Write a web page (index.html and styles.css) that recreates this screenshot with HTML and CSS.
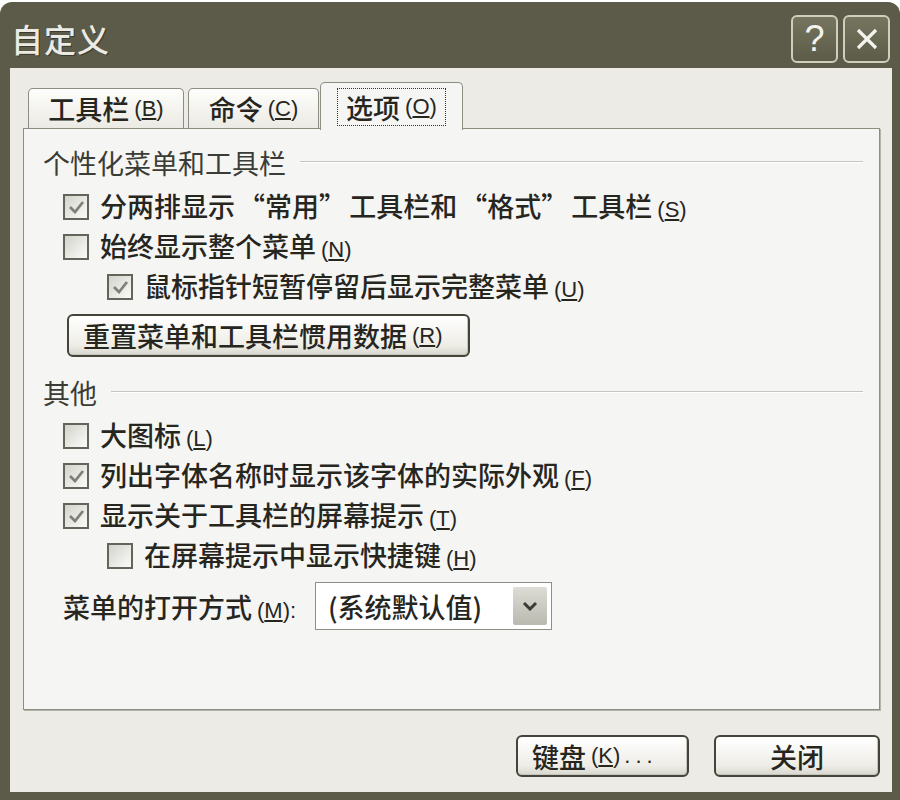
FILE: index.html
```
<!DOCTYPE html>
<html lang="zh">
<head>
    <meta charset="UTF-8" />
    <title>自定义</title>
    <link rel="stylesheet" href="styles.css">
</head>
<body>
    <div class="window">
        <div class="titlebar">
            <span class="title">自定义</span>
            <div class="caption-buttons">
                <span class="cap-btn">?</span>
                <span class="cap-btn">
                    <svg width="24" height="24" viewBox="0 0 24 24"><path d="M3 3 L21 21 M21 3 L3 21" stroke="#f4f4ee" stroke-width="3.2" fill="none"/></svg>
                </span>
            </div>
        </div>
        <div class="body">
            <div class="tabs">
                <div class="tab tab-toolbars">工具栏<span class="key">(<u>B</u>)</span></div>
                <div class="tab tab-commands">命令<span class="key">(<u>C</u>)</span></div>
                <div class="tab active"><span class="focus">选项<span class="key">(<u>O</u>)</span></span></div>
            </div>
            <div class="panel">
                <div class="group group-first"><span>个性化菜单和工具栏</span></div>
                <div class="row row-first">
                    <span class="check"><svg width="17" height="14" viewBox="0 0 17 14"><polyline points="2,7 7,12 15,2" stroke="#808078" stroke-width="2.8" fill="none"/></svg></span>
                    <span class="label">分两排显示 “常用” 工具栏和 “格式” 工具栏<span class="key">(<u>S</u>)</span></span>
                </div>
                <div class="row">
                    <span class="check"></span>
                    <span class="label">始终显示整个菜单<span class="key">(<u>N</u>)</span></span>
                </div>
                <div class="row row-sub">
                    <span class="check"><svg width="17" height="14" viewBox="0 0 17 14"><polyline points="2,7 7,12 15,2" stroke="#808078" stroke-width="2.8" fill="none"/></svg></span>
                    <span class="label">鼠标指针短暂停留后显示完整菜单<span class="key">(<u>U</u>)</span></span>
                </div>
                <button class="btn btn-reset">重置菜单和工具栏惯用数据<span class="key">(<u>R</u>)</span></button>

                <div class="group group-second"><span>其他</span></div>
                <div class="row row-first-b">
                    <span class="check"></span>
                    <span class="label">大图标<span class="key">(<u>L</u>)</span></span>
                </div>
                <div class="row">
                    <span class="check"><svg width="17" height="14" viewBox="0 0 17 14"><polyline points="2,7 7,12 15,2" stroke="#808078" stroke-width="2.8" fill="none"/></svg></span>
                    <span class="label">列出字体名称时显示该字体的实际外观<span class="key">(<u>F</u>)</span></span>
                </div>
                <div class="row">
                    <span class="check"><svg width="17" height="14" viewBox="0 0 17 14"><polyline points="2,7 7,12 15,2" stroke="#808078" stroke-width="2.8" fill="none"/></svg></span>
                    <span class="label">显示关于工具栏的屏幕提示<span class="key">(<u>T</u>)</span></span>
                </div>
                <div class="row row-sub">
                    <span class="check"></span>
                    <span class="label">在屏幕提示中显示快捷键<span class="key">(<u>H</u>)</span></span>
                </div>
                <div class="select-row">
                    <span class="select-label">菜单的打开方式<span class="key">(<u>M</u>):</span></span>
                    <div class="select">
                        <span>(系统默认值)</span>
                        <span class="arrow"><svg width="16" height="10" viewBox="0 0 16 10"><polyline points="2,2 8,8 14,2" stroke="#3a3a34" stroke-width="3" fill="none"/></svg></span>
                    </div>
                </div>
            </div>
            <div class="footer">
                <button class="btn btn-keys">键盘<span class="key">(<u>K</u>)</span><span class="dots">...</span></button>
                <button class="btn btn-close">关闭</button>
            </div>
        </div>
    </div>
</body>
</html>
```
FILE: styles.css
```
body {
    margin: 0;
    background: #ffffff;
    font-family: "Noto Sans CJK SC", "Liberation Sans", sans-serif;
    color: #26261f;
}
.window {
    width: 900px;
    height: 798px;
    margin-top: 2px;
    box-sizing: border-box;
    background: #5c5a48;
    border-radius: 12px 12px 0 0;
    padding: 0 8px 8px 10px;
    display: flex;
    flex-direction: column;
}
.titlebar {
    height: 66px;
    box-sizing: border-box;
    padding: 6px 2px 0 1px;
    display: flex;
    align-items: center;
    justify-content: space-between;
}
.title {
    font-size: 32px;
    font-weight: 500;
    letter-spacing: 1px;
    color: #ecebe3;
    text-shadow: 1px 1px 0 #3a392c;
}
.caption-buttons {
    display: flex;
    gap: 5px;
    align-self: flex-start;
    padding-top: 7px;
}
.cap-btn {
    width: 47px;
    height: 48px;
    box-sizing: border-box;
    border: 2px solid #cfcdbb;
    border-radius: 6px;
    background: linear-gradient(#76755f, #5c5b48);
    color: #f4f4ee;
    font: 36px "Liberation Sans", sans-serif;
    display: flex;
    align-items: center;
    justify-content: center;
}
.body {
    flex: 1;
    background: #ecebe5;
    padding: 14px 12px 0 13px;
    display: flex;
    flex-direction: column;
}
.tabs {
    display: flex;
    align-items: flex-end;
    height: 48px;
    padding-left: 5px;
    position: relative;
    z-index: 1;
}
.tab {
    height: 40px;
    box-sizing: border-box;
    margin: 0 4px 2px 0;
    border: 1px solid #8d8d82;
    border-bottom: none;
    border-radius: 5px 5px 0 0;
    background: linear-gradient(#fdfdfb, #ebeae3);
    display: flex;
    align-items: center;
    justify-content: center;
    font-size: 27px;
    font-weight: 500;
}
.tab-toolbars { width: 156px; }
.tab-commands { width: 131px; }
.tab.active {
    width: 143px;
    height: 48px;
    margin: 0 0 0 -3px;
    background: #f5f5f3;
    align-items: flex-start;
    padding-top: 5px;
}
.focus {
    height: 38px;
    box-sizing: border-box;
    border: 1px dotted #333;
    padding: 0 8px;
    display: flex;
    align-items: center;
}
.key {
    font-family: "Liberation Sans", sans-serif;
    font-size: 22px;
    font-weight: normal;
    margin-left: 5px;
}
.panel {
    height: 582px;
    flex: none;
    box-sizing: border-box;
    margin-top: -2px;
    background: #f5f5f3;
    border: 1px solid #8d8d82;
    box-shadow: 1px 1px 0 #b4b4aa;
    padding: 0 16px 0 0;
    display: flex;
    flex-direction: column;
    align-items: flex-start;
}
.group {
    align-self: stretch;
    display: flex;
    align-items: center;
    height: 30px;
    padding-left: 19px;
    font-size: 27px;
    color: #3c3c36;
}
.group::after {
    content: "";
    flex: 1;
    border-top: 1px solid #c5c5bd;
    border-bottom: 1px solid #ffffff;
    margin-left: 14px;
}
.group-first { margin-top: 18px; }
.group-second { margin-top: 20px; }
.row {
    display: flex;
    align-items: center;
    height: 40px;
    padding-left: 39px;
    font-size: 27px;
    font-weight: 500;
}
.row-first { margin-top: 10px; }
.row-first-b { margin-top: 9px; }
.row-sub { padding-left: 83px; }
.label {
    white-space: nowrap;
    padding-bottom: 3px;
    word-spacing: -3px;
}
.check {
    width: 26px;
    height: 26px;
    box-sizing: border-box;
    border: 2px solid #64645a;
    background: linear-gradient(135deg, #d3d3cc, #fbfbf9);
    margin-right: 11px;
    display: flex;
    align-items: center;
    justify-content: center;
}
.btn {
    font-family: inherit;
    font-size: 27px;
    font-weight: 500;
    color: #26261f;
    border: 2px solid #45443a;
    border-radius: 6px;
    background: linear-gradient(#ffffff, #eeede7 75%, #d8d7ce);
    box-shadow: inset -1px -1px 0 #c6c5bb;
    display: flex;
    align-items: center;
    padding: 0;
}
.btn-reset {
    margin: 7px 0 0 43px;
    width: 403px;
    height: 43px;
    padding-left: 14px;
}
.select-row {
    display: flex;
    align-items: center;
    height: 48px;
    margin-top: 6px;
    padding-left: 39px;
    font-size: 27px;
    font-weight: 500;
}
.select-label { width: 252px; }
.select {
    width: 237px;
    height: 48px;
    box-sizing: border-box;
    border: 1px solid #8f8f86;
    background: #ffffff;
    display: flex;
    align-items: center;
    justify-content: space-between;
    padding: 0 4px 0 12px;
}
.arrow {
    width: 34px;
    height: 38px;
    border-radius: 2px;
    background: linear-gradient(#dddcd5, #b9b9b0);
    display: flex;
    align-items: center;
    justify-content: center;
}
.footer {
    display: flex;
    justify-content: flex-end;
    gap: 25px;
    margin-top: 25px;
}
.btn-keys {
    width: 173px;
    height: 42px;
    padding-left: 14px;
}
.btn-close {
    width: 166px;
    height: 42px;
    justify-content: center;
}
.dots {
    font-family: "Liberation Sans", sans-serif;
    font-size: 22px;
    font-weight: normal;
    letter-spacing: 5px;
    margin-left: 4px;
}
```
